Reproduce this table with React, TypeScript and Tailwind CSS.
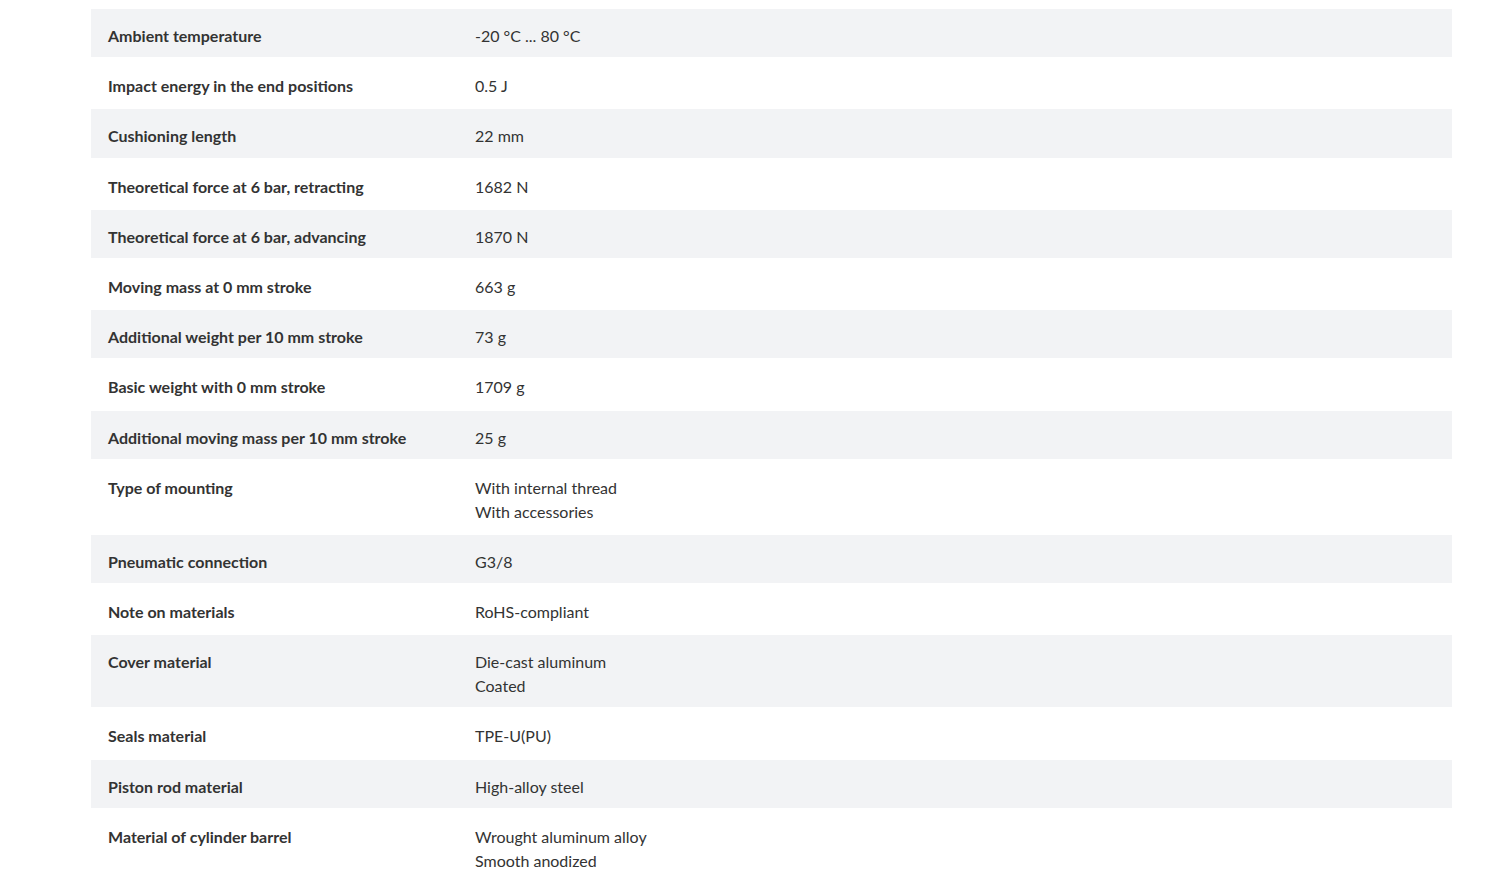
const rows: { label: string; value: string[] }[] = [
  { label: 'Ambient temperature', value: ['-20 °C ... 80 °C'] },
  { label: 'Impact energy in the end positions', value: ['0.5 J'] },
  { label: 'Cushioning length', value: ['22 mm'] },
  { label: 'Theoretical force at 6 bar, retracting', value: ['1682 N'] },
  { label: 'Theoretical force at 6 bar, advancing', value: ['1870 N'] },
  { label: 'Moving mass at 0 mm stroke', value: ['663 g'] },
  { label: 'Additional weight per 10 mm stroke', value: ['73 g'] },
  { label: 'Basic weight with 0 mm stroke', value: ['1709 g'] },
  { label: 'Additional moving mass per 10 mm stroke', value: ['25 g'] },
  { label: 'Type of mounting', value: ['With internal thread', 'With accessories'] },
  { label: 'Pneumatic connection', value: ['G3/8'] },
  { label: 'Note on materials', value: ['RoHS-compliant'] },
  { label: 'Cover material', value: ['Die-cast aluminum', 'Coated'] },
  { label: 'Seals material', value: ['TPE-U(PU)'] },
  { label: 'Piston rod material', value: ['High-alloy steel'] },
  { label: 'Material of cylinder barrel', value: ['Wrought aluminum alloy', 'Smooth anodized'] },
];

export default function App() {
  return (
    <div className="min-h-screen bg-white pt-2 pl-[91px] pr-[48px] font-['Lato',sans-serif] text-[16px] leading-6 text-[#333]">
      {rows.map((row, i) => (
        <div
          key={row.label}
          className={`flex border-y border-white pt-[15px] pb-[9.2px] ${i % 2 === 0 ? 'bg-[#f2f3f5]' : 'bg-white'}`}
        >
          <div className="w-[384px] shrink-0 pl-[17px] font-bold">{row.label}</div>
          <div>
            {row.value.map((v) => (
              <div key={v}>{v}</div>
            ))}
          </div>
        </div>
      ))}
    </div>
  );
}
